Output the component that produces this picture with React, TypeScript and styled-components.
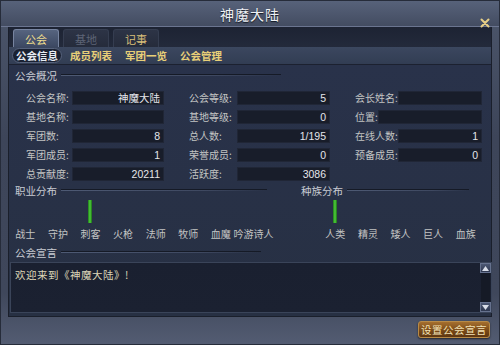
import React from 'react';
import styled, { createGlobalStyle } from 'styled-components';

const GlobalStyle = createGlobalStyle`
  html, body {
    margin: 0;
    padding: 0;
    background: #2b3242;
  }
  * {
    box-sizing: border-box;
  }
`;

const cjk = `"Noto Sans CJK SC", "Noto Sans", sans-serif`;

const Window = styled.div`
  width: 500px;
  height: 345px;
  display: flex;
  flex-direction: column;
  background: linear-gradient(180deg, #4c566b 0%, #3d4559 40%, #3f475b 85%, #535c72 100%);
  border: 1px solid #262c3a;
  font-family: ${cjk};
  overflow: hidden;
`;

const TitleBar = styled.div`
  position: relative;
  height: 26px;
  display: flex;
  align-items: center;
  justify-content: center;
  background: linear-gradient(180deg, #57627a 0%, #434c61 100%);
  border-bottom: 1px solid #6b7590;
`;

const Title = styled.div`
  color: #eef0f4;
  font-size: 14px;
  letter-spacing: 1px;
  text-shadow: 0 1px 1px #11151f;
`;

const Close = styled.div`
  position: absolute;
  right: 9px;
  top: 8px;
  width: 10px;
  height: 10px;
`;

const Body = styled.div`
  margin: 0 7px;
  display: flex;
  flex-direction: column;
  background: #273043;
  border: 1px solid #1a1f2b;
  border-top: none;
  height: 290px;
`;

const TabRow = styled.div`
  height: 20px;
  display: flex;
  align-items: flex-end;
  gap: 4px;
  padding-left: 4px;
  background: linear-gradient(180deg, #1d2333 0%, #232a3b 100%);
`;

const Tab = styled.div<{ $active?: boolean; $dim?: boolean }>`
  width: 46px;
  height: 18px;
  display: flex;
  align-items: center;
  justify-content: center;
  font-size: 11px;
  border-radius: 3px 3px 0 0;
  color: ${(p) => (p.$active ? '#f0df8e' : p.$dim ? '#5d6476' : '#d8bf7a')};
  background: ${(p) =>
    p.$active
      ? 'linear-gradient(180deg, #56647f 0%, #3c4862 100%)'
      : 'linear-gradient(180deg, #2d3446 0%, #252b3b 100%)'};
  border: 1px solid ${(p) => (p.$active ? '#7784a0' : '#353d50')};
  border-bottom: none;
`;

const SubTabRow = styled.div`
  height: 18px;
  display: flex;
  align-items: center;
  padding-left: 3px;
  background: linear-gradient(180deg, #3b475f 0%, #323d53 100%);
  border-bottom: 1px solid #1c2130;
`;

const SubTab = styled.div<{ $active?: boolean }>`
  height: 15px;
  width: ${(p) => (p.$active ? '50px' : '55px')};
  margin-right: ${(p) => (p.$active ? '7px' : '0')};
  display: flex;
  align-items: center;
  justify-content: ${(p) => (p.$active ? 'center' : 'flex-start')};
  font-size: 10.5px;
  font-weight: bold;
  color: ${(p) => (p.$active ? '#e8ecf2' : '#e8cf78')};
  background: ${(p) => (p.$active ? '#1a2132' : 'transparent')};
  border: 1px solid ${(p) => (p.$active ? '#56627c' : 'transparent')};
  border-radius: 8px;
`;

const Content = styled.div`
  flex: 1;
  display: flex;
  flex-direction: column;
  padding-top: 3px;
  background: linear-gradient(180deg, #29324a 0%, #273043 100%);
`;

const SectionHeader = styled.div<{ $top?: number }>`
  height: 14px;
  margin-top: ${(p) => p.$top ?? 0}px;
  display: flex;
  align-items: center;
  gap: 4px;
  padding-left: 6px;
  font-size: 10.5px;
  color: #c9ccd3;
`;

const Rule = styled.div<{ $w: number }>`
  width: ${(p) => p.$w}px;
  height: 2px;
  border-top: 1px solid #151a26;
  background: linear-gradient(90deg, #4e5a74 0%, #3e4860 70%, transparent 100%);
`;

const InfoGrid = styled.div`
  margin-top: 6px;
  padding-left: 17px;
  display: grid;
  grid-template-columns: 138px 141px 127px;
  column-gap: 25px;
  grid-auto-rows: 19px;
`;

const Field = styled.div`
  display: flex;
  align-items: center;
`;

const Label = styled.div<{ $w?: number }>`
  width: ${(p) => (p.$w ? `${p.$w}px` : 'auto')};
  flex-shrink: 0;
  font-size: 10px;
  color: #c3c4c3;
  white-space: nowrap;
`;

const ValueBox = styled.div`
  flex: 1;
  height: 14px;
  display: flex;
  align-items: center;
  justify-content: flex-end;
  padding-right: 3px;
  background: #181d2a;
  border: 1px solid #202636;
  font-size: 10.5px;
  color: #e4e6ea;
  font-family: "Liberation Sans", ${cjk};
`;

const DistRow = styled.div`
  display: flex;
`;

const DistGroup = styled.div<{ $w: number }>`
  width: ${(p) => p.$w}px;
  display: flex;
  flex-direction: column;
`;

const Columns = styled.div<{ $left: number }>`
  display: flex;
  padding-left: ${(p) => p.$left}px;
`;

const Col = styled.div`
  width: 32.6px;
  display: flex;
  flex-direction: column;
  align-items: center;
`;

const BarSlot = styled.div`
  height: 29px;
  display: flex;
  align-items: flex-end;
`;

const Bar = styled.div`
  width: 4px;
  margin-bottom: 3px;
  background: linear-gradient(90deg, #1f7a1a 0%, #4fd23c 50%, #1c6c18 100%);
`;

const ColLabel = styled.div`
  height: 14px;
  font-size: 10px;
  color: #c3c4c3;
  white-space: nowrap;
`;

const Notice = styled.div`
  position: relative;
  margin: 3px 0 0 1px;
  height: 51px;
  width: 482px;
  padding: 4px 16px 0 4px;
  background: linear-gradient(180deg, #1a2030 0%, #1b2131 100%);
  border: 1px solid #3a4459;
  font-size: 10.5px;
  color: #ddd6b8;
  letter-spacing: 0.5px;
`;

const ScrollBtn = styled.div<{ $pos: 'top' | 'bottom' }>`
  position: absolute;
  right: 0;
  ${(p) => (p.$pos === 'top' ? 'top: 0;' : 'bottom: 0;')}
  width: 11px;
  height: 10px;
  display: flex;
  align-items: center;
  justify-content: center;
  background: linear-gradient(180deg, #4b5773 0%, #2f3850 100%);
  border: 1px solid #66728e;
`;

const Track = styled.div`
  position: absolute;
  right: 1px;
  top: 10px;
  bottom: 10px;
  width: 9px;
  background: #151a26;
`;

const Footer = styled.div`
  flex: 1;
  display: flex;
  justify-content: flex-end;
  align-items: flex-start;
  padding: 4px 9px 0 0;
`;

const ActionButton = styled.div`
  width: 72px;
  height: 17px;
  display: flex;
  align-items: center;
  justify-content: center;
  border-radius: 3px;
  border: 1px solid #b88a46;
  background: linear-gradient(180deg, #a56f2e 0%, #7a4a18 55%, #5c3510 100%);
  box-shadow: 0 1px 2px rgba(0, 0, 0, 0.6);
  font-size: 10.5px;
  color: #f3e3b6;
  letter-spacing: 0.5px;
`;

const Arrow = ({ up }: { up?: boolean }) => (
  <svg width="7" height="5" viewBox="0 0 7 5">
    <path d={up ? 'M0 5 L3.5 0 L7 5 Z' : 'M0 0 L3.5 5 L7 0 Z'} fill="#d9dee8" />
  </svg>
);

const jobs = ['战士', '守护', '刺客', '火枪', '法师', '牧师', '血魔', '吟游诗人'];
const jobBars = [0, 0, 23, 0, 0, 0, 0, 0];
const races = ['人类', '精灵', '矮人', '巨人', '血族'];
const raceBars = [23, 0, 0, 0, 0];

// [label1, value1, label2, value2, label3, value3, label3 width (-1 = empty cell)]
const rows: [string, string, string, string, string, string, number][] = [
  ['公会名称:', '神魔大陆', '公会等级:', '5', '会长姓名:', '', 43],
  ['基地名称:', '', '基地等级:', '0', '位置:', '', 0],
  ['军团数:', '8', '总人数:', '1/195', '在线人数:', '1', 43],
  ['军团成员:', '1', '荣誉成员:', '0', '预备成员:', '0', 43],
  ['总贡献度:', '20211', '活跃度:', '3086', '', '', -1],
];

export default function App() {
  return (
    <>
      <GlobalStyle />
      <Window>
        <TitleBar>
          <Title>神魔大陆</Title>
          <Close>
            <svg width="10" height="10" viewBox="0 0 10 10">
              <path d="M1.5 1.5 L8.5 8.5 M8.5 1.5 L1.5 8.5" stroke="#e8cf86" strokeWidth="2" strokeLinecap="round" />
            </svg>
          </Close>
        </TitleBar>
        <Body>
          <TabRow>
            <Tab $active>公会</Tab>
            <Tab $dim>基地</Tab>
            <Tab>记事</Tab>
          </TabRow>
          <SubTabRow>
            <SubTab $active>公会信息</SubTab>
            <SubTab>成员列表</SubTab>
            <SubTab>军团一览</SubTab>
            <SubTab>公会管理</SubTab>
          </SubTabRow>
          <Content>
            <SectionHeader>
              公会概况
              <Rule $w={220} />
            </SectionHeader>
            <InfoGrid>
              {rows.map((r) => (
                <React.Fragment key={r[0]}>
                  <Field>
                    <Label $w={46}>{r[0]}</Label>
                    <ValueBox>{r[1]}</ValueBox>
                  </Field>
                  <Field>
                    <Label $w={48}>{r[2]}</Label>
                    <ValueBox>{r[3]}</ValueBox>
                  </Field>
                  <Field>
                    {r[6] !== -1 && (
                      <>
                        <Label $w={r[6] || undefined}>{r[4]}</Label>
                        <ValueBox>{r[5]}</ValueBox>
                      </>
                    )}
                  </Field>
                </React.Fragment>
              ))}
            </InfoGrid>
            <DistRow>
              <DistGroup $w={286}>
                <SectionHeader>
                  职业分布
                  <Rule $w={206} />
                </SectionHeader>
                <Columns $left={0}>
                  {jobs.map((j, i) => (
                    <Col key={j}>
                      <BarSlot>{jobBars[i] > 0 && <Bar style={{ height: jobBars[i] }} />}</BarSlot>
                      <ColLabel>{j}</ColLabel>
                    </Col>
                  ))}
                </Columns>
              </DistGroup>
              <DistGroup $w={194}>
                <SectionHeader>
                  种族分布
                  <Rule $w={122} />
                </SectionHeader>
                <Columns $left={24}>
                  {races.map((r, i) => (
                    <Col key={r}>
                      <BarSlot>{raceBars[i] > 0 && <Bar style={{ height: raceBars[i] }} />}</BarSlot>
                      <ColLabel>{r}</ColLabel>
                    </Col>
                  ))}
                </Columns>
              </DistGroup>
            </DistRow>
            <SectionHeader $top={5}>
              公会宣言
              <Rule $w={200} />
            </SectionHeader>
            <Notice>
              欢迎来到《神魔大陆》!
              <Track />
              <ScrollBtn $pos="top">
                <Arrow up />
              </ScrollBtn>
              <ScrollBtn $pos="bottom">
                <Arrow />
              </ScrollBtn>
            </Notice>
          </Content>
        </Body>
        <Footer>
          <ActionButton>设置公会宣言</ActionButton>
        </Footer>
      </Window>
    </>
  );
}
